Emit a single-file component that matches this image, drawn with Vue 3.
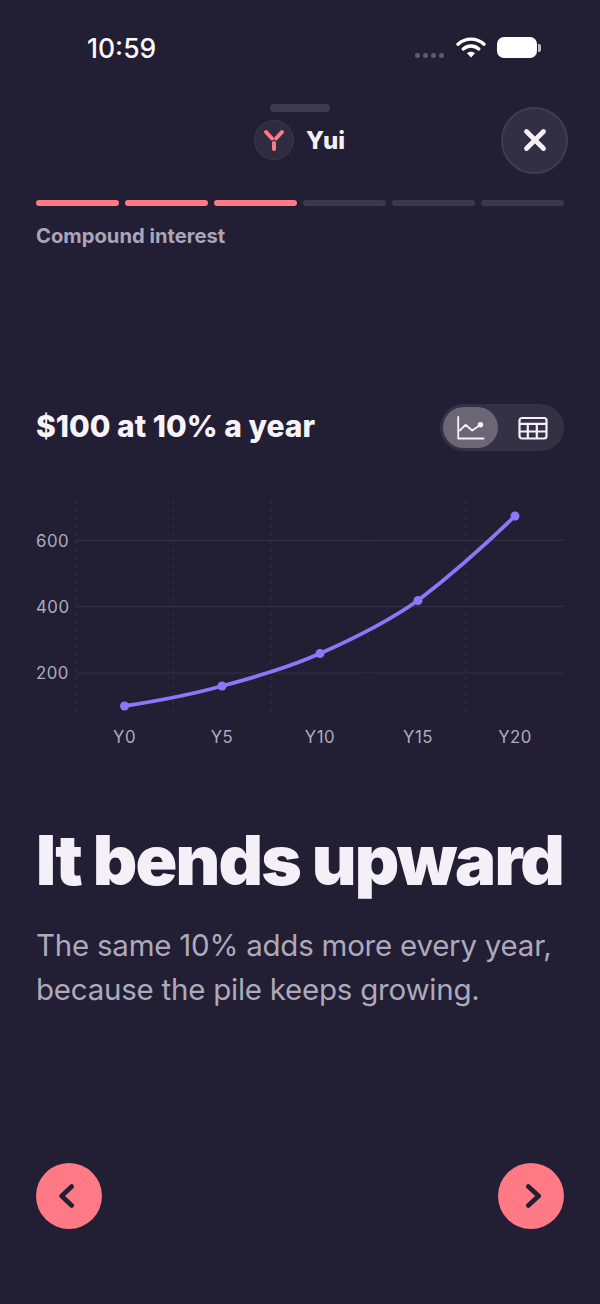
<script setup>
const segments = [true, true, true, false, false, false]
const yTicks = [
  { label: '600', y: 50.5 },
  { label: '400', y: 116.5 },
  { label: '200', y: 183 }
]
const xLines = [40, 137.5, 235, 332, 430]
const points = [
  { x: 88.5, y: 216, label: 'Y0' },
  { x: 186, y: 196, label: 'Y5' },
  { x: 284, y: 163.5, label: 'Y10' },
  { x: 382, y: 110.5, label: 'Y15' },
  { x: 479, y: 26, label: 'Y20' }
]
const curve = 'M88.5 216 C121 211 154 205 186 196 C219 187 251 178 284 163.5 C317 149 350 133 382 110.5 C415 85 447 57 479 26'
</script>

<template>
  <div class="screen">
    <div class="status">
      <span class="time">10:59</span>
      <div class="status-right">
        <div class="dots"><i></i><i></i><i></i><i></i></div>
        <svg class="wifi" width="30" height="22" viewBox="0 0 30 22" fill="none">
          <path d="M2 8.2C9.5 1.4 20.5 1.4 28 8.2" stroke="#fff" stroke-width="3.4" stroke-linecap="round" />
          <path d="M7.2 13C11.8 9 18.2 9 22.8 13" stroke="#fff" stroke-width="3.4" stroke-linecap="round" />
          <path d="M11 17.2C13.4 15.2 16.6 15.2 19 17.2L15 21.4Z" fill="#fff" />
        </svg>
        <div class="battery"><span class="cell"></span><span class="nub"></span></div>
      </div>
    </div>

    <div class="grabber"></div>

    <div class="header">
      <div class="persona">
        <span class="avatar">
          <svg width="24" height="24" viewBox="0 0 24 24" fill="none" stroke="#ff7a85" stroke-width="4" stroke-linecap="round">
            <path d="M4 4L10 10.500" />
            <path d="M20 4L14 10.500" />
            <path d="M12 15V21" />
          </svg>
        </span>
        <span class="name">Yui</span>
      </div>
      <button class="close">
        <svg width="26" height="26" viewBox="0 0 26 26" fill="none" stroke="#f5f0f8" stroke-width="4.800" stroke-linecap="round">
          <path d="M4.500 4.500L21.500 21.500M21.500 4.500L4.500 21.500" />
        </svg>
      </button>
    </div>

    <div class="progress">
      <span v-for="(on, i) in segments" :key="i" :class="['seg', { on }]"></span>
    </div>
    <div class="topic">Compound interest</div>

    <div class="chart-head">
      <h2>$100 at 10% a year</h2>
      <div class="toggle">
        <span class="tab active">
          <svg width="30" height="28" viewBox="0 0 30 28" fill="none" stroke="#f5f0f8" stroke-width="1.800" stroke-linecap="round" stroke-linejoin="round">
            <path d="M2.200 3V24.500H27.500" />
            <path d="M3.800 16.500L9.500 10.800L16.200 16.500L24.500 10.800" />
            <circle cx="24.500" cy="10.800" r="1.800" fill="#f5f0f8" />
          </svg>
        </span>
        <span class="tab second">
          <svg width="30" height="24" viewBox="0 0 30 24" fill="none" stroke="#f5f0f8" stroke-width="2.200" stroke-linejoin="round">
            <rect x="1.500" y="2" width="27" height="20.500" rx="2.500" />
            <path d="M1.500 7.800H28.500M1.500 15.500H28.500M9.800 7.800V22.500M18.800 7.800V22.500" />
          </svg>
        </span>
      </div>
    </div>

    <svg class="chart" width="564" height="270" viewBox="0 0 564 270">
      <line v-for="x in xLines" :key="x" :x1="x" :x2="x" y1="10" y2="228" class="vline" />
      <line v-for="t in yTicks" :key="t.label" x1="40" x2="528" :y1="t.y" :y2="t.y" class="hline" />
      <text v-for="t in yTicks" :key="'t' + t.label" x="0" :y="t.y + 6" class="tick">{{ t.label }}</text>
      <path :d="curve" fill="none" stroke="#8b78f8" stroke-width="3.800" stroke-linecap="round" />
      <circle v-for="p in points" :key="'p' + p.label" :cx="p.x" :cy="p.y" r="4.500" fill="#8b78f8" />
      <text v-for="p in points" :key="'l' + p.label" :x="p.x" y="253" text-anchor="middle" class="tick">{{ p.label }}</text>
    </svg>

    <h1>It bends upward</h1>
    <p>The same 10% adds more every year,<br />because the pile keeps growing.</p>

    <div class="nav">
      <button class="round">
        <svg width="24" height="24" viewBox="0 0 24 24" fill="none" stroke="#221e33" stroke-width="4.600" stroke-linecap="round" stroke-linejoin="round">
          <path d="M14.700 2.500L4.600 12L14.700 21.500" />
        </svg>
      </button>
      <button class="round">
        <svg width="24" height="24" viewBox="0 0 24 24" fill="none" stroke="#221e33" stroke-width="4.600" stroke-linecap="round" stroke-linejoin="round">
          <path d="M9.300 2.500L19.700 12L9.300 21.500" />
        </svg>
      </button>
    </div>
  </div>
</template>

<style>
html, body { margin: 0; background: #221e33; }
</style>

<style scoped>
.screen {
  width: 600px;
  height: 1304px;
  overflow: hidden;
  box-sizing: border-box;
  background: #221e33;
  font-family: Inter, "Liberation Sans", sans-serif;
  color: #f5f0f8;
  display: flex;
  flex-direction: column;
}
.status {
  height: 104px;
  flex: none;
  box-sizing: border-box;
  padding: 32px 59px 0 87px;
  display: flex;
  justify-content: space-between;
  align-items: flex-start;
}
.time {
  font-size: 26.500px;
  line-height: 32px;
  font-weight: 500;
  color: #fbf9fc;
}
.status-right { display: flex; align-items: flex-start; }
.dots { display: flex; gap: 3px; margin-top: 21px; margin-right: 12px; }
.dots i { width: 5px; height: 5px; border-radius: 50%; background: #5f5a70; display: block; }
.wifi { margin-top: 4px; margin-right: 11px; }
.battery { display: flex; align-items: center; margin-top: 5px; }
.cell { width: 40px; height: 21px; border-radius: 7px; background: #fff; display: block; }
.nub { width: 3px; height: 8px; margin-left: 1px; border-radius: 0 2px 2px 0; background: #bdbac4; display: block; }
.grabber {
  flex: none;
  width: 60px;
  height: 8px;
  border-radius: 4px;
  background: #3e3a4f;
  margin-left: 270px;
}
.header {
  flex: none;
  height: 68px;
  margin-top: -6px;
  padding: 0 32px 0 254px;
  display: flex;
  justify-content: space-between;
  align-items: center;
}
.persona { display: flex; align-items: center; gap: 12px; }
.avatar {
  width: 40px;
  height: 40px;
  box-sizing: border-box;
  border-radius: 50%;
  background: #2f2b40;
  border: 1px solid #3d394e;
  display: flex;
  align-items: center;
  justify-content: center;
}
.name { font-size: 24px; font-weight: 800; line-height: 30px; margin-top: 2px; }
.close {
  width: 67px;
  height: 67px;
  padding: 0;
  border-radius: 50%;
  background: #322e43;
  border: 2px solid #403c51;
  display: flex;
  align-items: center;
  justify-content: center;
}
.progress {
  flex: none;
  margin-top: 26px;
  padding: 0 36px;
  display: flex;
  gap: 6px;
}
.seg { flex: 1; height: 6px; border-radius: 3px; background: #3b374c; }
.seg.on { background: #ff7a85; }
.topic {
  flex: none;
  margin-top: 18px;
  padding-left: 36px;
  font-size: 20.200px;
  line-height: 24px;
  font-weight: 700;
  color: #aaa5b8;
}
.chart-head {
  flex: none;
  margin-top: 156px;
  padding: 0 36px;
  height: 47px;
  display: flex;
  justify-content: space-between;
  align-items: center;
}
h2 {
  margin: -3px 0 0;
  font-size: 30px;
  line-height: 36px;
  font-weight: 800;
  color: #f7f3fa;
}
.toggle {
  width: 124px;
  height: 47px;
  box-sizing: border-box;
  padding: 3px;
  border-radius: 24px;
  background: #353144;
  display: flex;
}
.tab {
  flex: none;
  width: 55px;
  height: 41px;
  border-radius: 21px;
  display: flex;
  align-items: center;
  justify-content: center;
}
.tab.second { width: 63px; box-sizing: border-box; padding-left: 7px; }
.tab.active { background: #6a6676; }
.chart {
  flex: none;
  display: block;
  margin-top: 39px;
  margin-left: 36px;
}
.vline { stroke: #322e41; stroke-width: 1; stroke-dasharray: 4 4; }
.hline { stroke: #353144; stroke-width: 1; }
.tick { font-size: 16.800px; fill: #b0abbd; letter-spacing: 0.5px; font-family: Inter, "Liberation Sans", sans-serif; }
h1 {
  flex: none;
  margin: 60px 0 0;
  padding-left: 36px;
  font-size: 69px;
  line-height: 80px;
  font-weight: 900;
  letter-spacing: -1.850px;
  white-space: nowrap;
  color: #f5f0f8;
}
p {
  flex: none;
  margin: 23px 0 0;
  padding-left: 36px;
  font-size: 29.500px;
  line-height: 44px;
  font-weight: 400;
  letter-spacing: -0.240px;
  color: #aeaabb;
  white-space: nowrap;
}
.nav {
  flex: none;
  margin-top: auto;
  margin-bottom: 75px;
  padding: 0 36px;
  display: flex;
  justify-content: space-between;
}
.round {
  width: 66px;
  height: 66px;
  padding: 0;
  border: 0;
  border-radius: 50%;
  background: #ff7a85;
  display: flex;
  align-items: center;
  justify-content: center;
}
</style>
